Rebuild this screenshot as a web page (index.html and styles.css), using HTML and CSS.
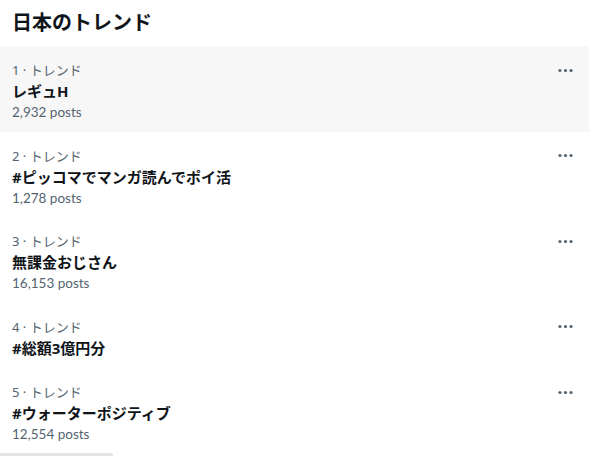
FILE: index.html
```html
<!DOCTYPE html>
<html lang="ja">
<head>
<meta charset="utf-8">
<link rel="stylesheet" href="styles.css">
</head>
<body>
<div class="panel">
  <h2 class="heading">日本のトレンド</h2>
  <div class="trend active">
    <div class="meta"><span>1 · トレンド</span><svg class="more" viewBox="0 0 24 24"><circle cx="5" cy="12" r="2"/><circle cx="12" cy="12" r="2"/><circle cx="19" cy="12" r="2"/></svg></div>
    <div class="name">レギュH</div>
    <div class="count">2,932 posts</div>
  </div>
  <div class="trend">
    <div class="meta"><span>2 · トレンド</span><svg class="more" viewBox="0 0 24 24"><circle cx="5" cy="12" r="2"/><circle cx="12" cy="12" r="2"/><circle cx="19" cy="12" r="2"/></svg></div>
    <div class="name">#ピッコマでマンガ読んでポイ活</div>
    <div class="count">1,278 posts</div>
  </div>
  <div class="trend">
    <div class="meta"><span>3 · トレンド</span><svg class="more" viewBox="0 0 24 24"><circle cx="5" cy="12" r="2"/><circle cx="12" cy="12" r="2"/><circle cx="19" cy="12" r="2"/></svg></div>
    <div class="name">無課金おじさん</div>
    <div class="count">16,153 posts</div>
  </div>
  <div class="trend">
    <div class="meta"><span>4 · トレンド</span><svg class="more" viewBox="0 0 24 24"><circle cx="5" cy="12" r="2"/><circle cx="12" cy="12" r="2"/><circle cx="19" cy="12" r="2"/></svg></div>
    <div class="name">#総額3億円分</div>
  </div>
  <div class="trend">
    <div class="meta"><span>5 · トレンド</span><svg class="more" viewBox="0 0 24 24"><circle cx="5" cy="12" r="2"/><circle cx="12" cy="12" r="2"/><circle cx="19" cy="12" r="2"/></svg></div>
    <div class="name">#ウォーターポジティブ</div>
    <div class="count">12,554 posts</div>
  </div>
</div>
<div class="scrollbar"></div>
</body>
</html>
```

FILE: styles.css
```css
html, body {
  margin: 0;
  padding: 0;
  background: #ffffff;
  overflow: hidden;
}
body {
  font-family: "Noto Sans", "Noto Sans CJK JP", sans-serif;
  color: #0f1419;
}
.panel {
  width: 589px;
}
.heading {
  margin: 0;
  padding: 0 12px;
  height: 46px;
  line-height: 46px;
  font-size: 20px;
  font-weight: 700;
  color: #0f1419;
}
.trend {
  padding: 14px 12px 9.5px 12px;
}
.trend.active {
  background: #f7f7f7;
}
.meta {
  display: flex;
  align-items: center;
  justify-content: space-between;
  height: 20px;
  font-size: 13px;
  line-height: 20px;
  color: #536471;
}
.more {
  width: 19px;
  height: 19px;
  fill: #536471;
  margin-right: 2px;
}
.name {
  font-size: 15px;
  font-weight: 700;
  line-height: 22px;
  color: #0f1419;
}
.count {
  font-family: "Lato", "Noto Sans", sans-serif;
  font-size: 13.5px;
  line-height: 20px;
  color: #536471;
}
.scrollbar {
  position: fixed;
  left: 0;
  bottom: 0;
  width: 113px;
  height: 3px;
  background: #e4e4e4;
  border-radius: 2px 2px 0 0;
}
```
